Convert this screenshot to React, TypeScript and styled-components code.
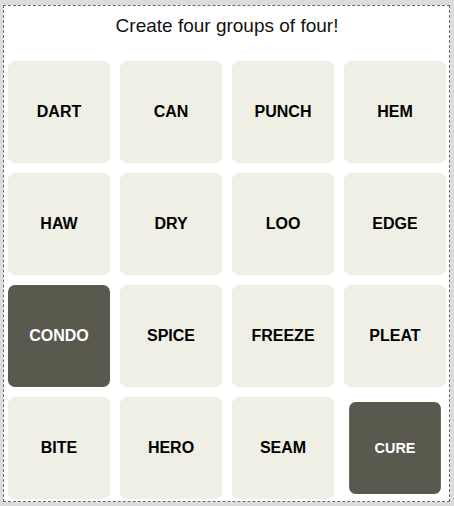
import React from "react";
import styled, { createGlobalStyle } from "styled-components";

const GlobalStyle = createGlobalStyle`
  html, body {
    margin: 0;
    padding: 0;
    background: #dcdcdc;
  }
  body {
    font-family: "Liberation Sans", Arial, sans-serif;
  }
`;

const Frame = styled.div`
  box-sizing: border-box;
  width: 447px;
  height: 497px;
  margin: 5px 0 0 3px;
  padding: 0 3px 1px 4px;
  background: #ffffff;
  border: 1px dashed #6a6a6a;
  display: flex;
  flex-direction: column;
`;

const Title = styled.h1`
  margin: 0;
  height: 40px;
  display: flex;
  align-items: center;
  justify-content: center;
  font-size: 19px;
  font-weight: 400;
  color: #121212;
`;

const Board = styled.div`
  margin-top: 15px;
  display: grid;
  grid-template-columns: repeat(4, 102px);
  grid-auto-rows: 102px;
  gap: 10px;
`;

const Tile = styled.button<{ $selected?: boolean; $shrink?: boolean }>`
  border: none;
  padding: 0;
  border-radius: 7px;
  background: ${({ $selected }) => ($selected ? "#5a594e" : "#efefe6")};
  color: ${({ $selected }) => ($selected ? "#ffffff" : "#000000")};
  font-family: "Liberation Sans", Arial, sans-serif;
  font-size: 16px;
  font-weight: 700;
  text-transform: uppercase;
  display: flex;
  align-items: center;
  justify-content: center;
  cursor: pointer;
  transform: ${({ $shrink }) => ($shrink ? "scale(0.9)" : "none")};
`;

const words = [
  "DART", "CAN", "PUNCH", "HEM",
  "HAW", "DRY", "LOO", "EDGE",
  "CONDO", "SPICE", "FREEZE", "PLEAT",
  "BITE", "HERO", "SEAM", "CURE",
];

const selected = ["CONDO", "CURE"];

const App = () => {
  return (
    <>
      <GlobalStyle />
      <Frame>
        <Title>Create four groups of four!</Title>
        <Board>
          {words.map((word) => (
            <Tile
              key={word}
              $selected={selected.includes(word)}
              $shrink={word === "CURE"}
            >
              {word}
            </Tile>
          ))}
        </Board>
      </Frame>
    </>
  );
};

export default App;
